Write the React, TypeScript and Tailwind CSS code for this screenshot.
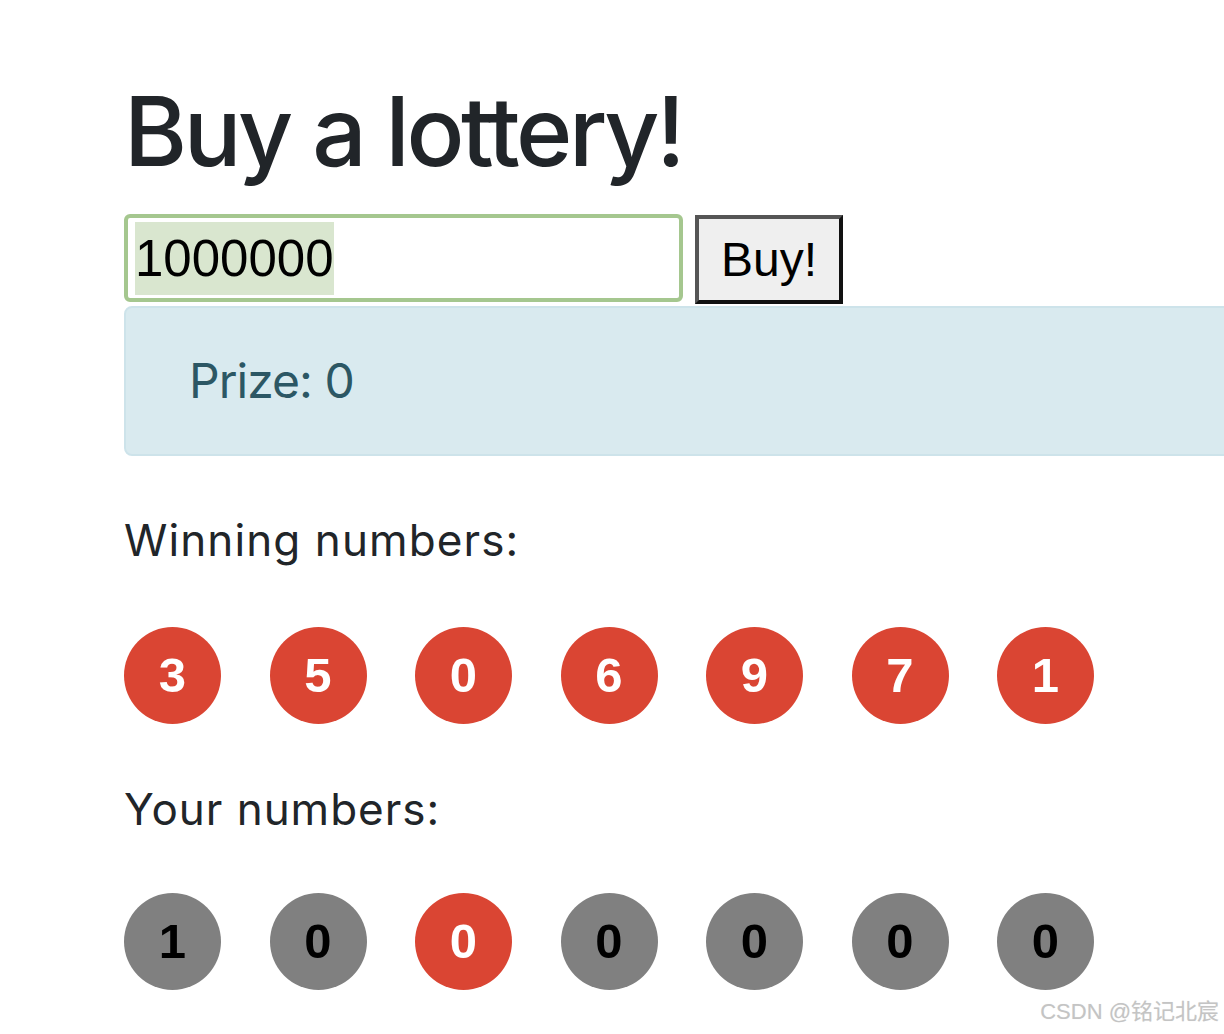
import React from "react";

const winning = [3, 5, 0, 6, 9, 7, 1];
const yours = [1, 0, 0, 0, 0, 0, 0];

function Ball({ n, match }: { n: number; match: boolean }) {
  return (
    <div
      className={
        "w-[97px] h-[97px] rounded-full flex items-center justify-center text-[49px] font-bold leading-none " +
        (match ? "bg-[#da4533] text-white" : "bg-[#808080] text-black")
      }
      style={{ fontFamily: '"Liberation Sans", Arial, sans-serif' }}
    >
      {n}
    </div>
  );
}

export default function App() {
  return (
    <div className="relative w-[1224px] h-[1034px] overflow-hidden bg-white" style={{ fontFamily: 'Inter, "Noto Sans", sans-serif' }}>
      <div className="pt-[74px] pl-[124px]">
        <h1 className="text-[96px] leading-[1.2] font-medium text-[#212529] tracking-[-0.035em] m-0 h-[115px]">Buy a lottery!</h1>
        <div className="flex items-start gap-[12px] mt-[25px]">
          <div className="w-[559px] h-[88px] border-[4px] border-[#a5c78f] rounded-[6px] flex items-center pl-[7px]">
            <span
              className="bg-[#d9e6cf] text-black text-[51px] h-[73px] leading-[73px]"
              style={{ fontFamily: '"Liberation Sans", Arial, sans-serif' }}
            >
              1000000
            </span>
          </div>
          <div
            className="mt-[1px] w-[148px] h-[89px] border-[4px] border-t-[#555555] border-l-[#555555] border-r-[#111111] border-b-[#111111] bg-[#efefef] flex items-center justify-center text-[48px] text-black"
            style={{ fontFamily: '"Liberation Sans", Arial, sans-serif' }}
          >
            Buy!
          </div>
        </div>
        <div className="mt-[2px] w-[1140px] h-[150px] bg-[#d9eaef] border-[2px] border-[#cde3ea] rounded-[8px] flex items-center pl-[63px]">
          <span className="text-[48px] text-[#2c5764] tracking-[-0.02em]">Prize: 0</span>
        </div>
        <p className="mt-[51px] text-[44px] leading-[66px] text-[#212529] tracking-[0.025em]">Winning numbers:</p>
        <div className="flex gap-[48.5px] mt-[54px]">
          {winning.map((n, i) => (
            <Ball key={i} n={n} match={true} />
          ))}
        </div>
        <p className="mt-[52px] text-[44px] leading-[66px] text-[#212529] tracking-[0.022em]">Your numbers:</p>
        <div className="flex gap-[48.5px] mt-[51px]">
          {yours.map((n, i) => (
            <Ball key={i} n={n} match={yours[i] === winning[i]} />
          ))}
        </div>
      </div>
      <div
        className="absolute right-[5px] bottom-[6px] text-[22px] text-[#c4c4c4] [text-shadow:0_0_1px_#e8e8e8]"
        style={{ fontFamily: '"Liberation Sans", Arial, "Noto Sans CJK SC", sans-serif' }}
      >
        CSDN @铭记北宸
      </div>
    </div>
  );
}
